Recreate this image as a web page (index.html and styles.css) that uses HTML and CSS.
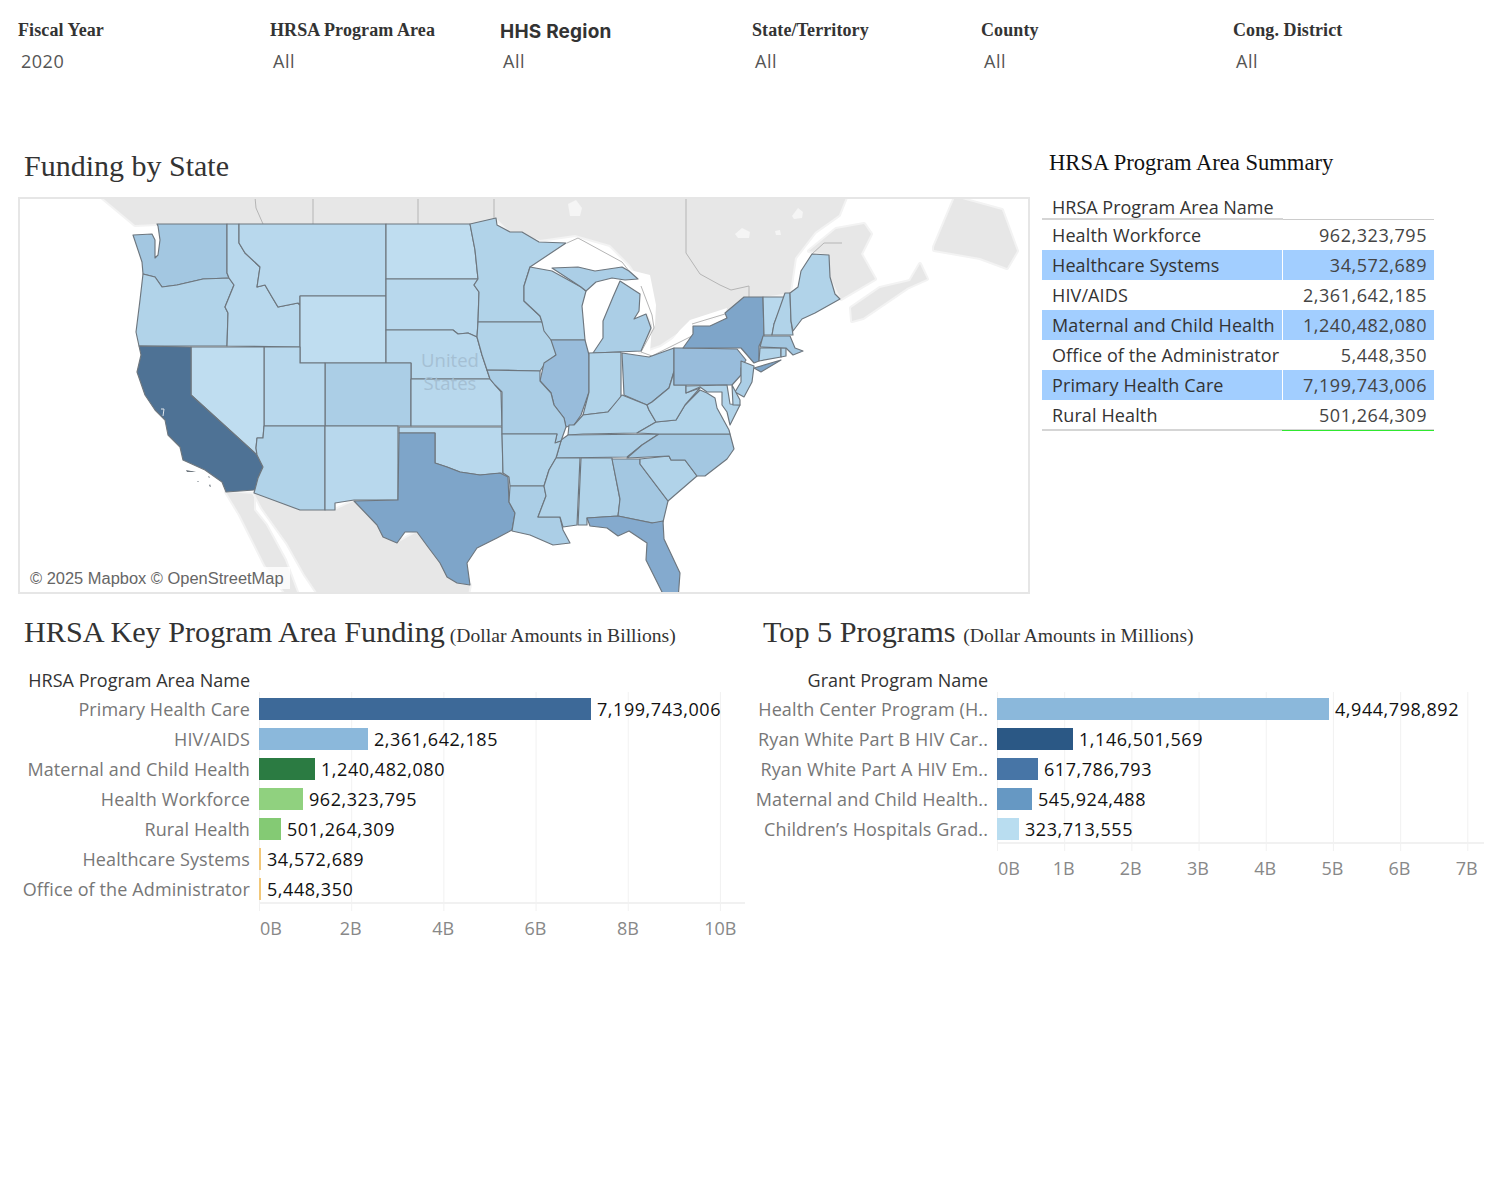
FILE: index.html
```html
<!DOCTYPE html>
<html lang="en">
<head>
<meta charset="utf-8">
<title>HRSA Funding</title>
<link rel="stylesheet" href="styles.css">
</head>
<body>
<header class="filters">
  <div class="filter w252"><div class="filter-label">Fiscal Year</div><div class="filter-value">2020</div></div>
  <div class="filter w230"><div class="filter-label">HRSA Program Area</div><div class="filter-value">All</div></div>
  <div class="filter w252"><div class="filter-label alt">HHS Region</div><div class="filter-value">All</div></div>
  <div class="filter w229"><div class="filter-label">State/Territory</div><div class="filter-value">All</div></div>
  <div class="filter w252"><div class="filter-label">County</div><div class="filter-value">All</div></div>
  <div class="filter"><div class="filter-label">Cong. District</div><div class="filter-value">All</div></div>
</header>

<section class="top">
  <div class="map-col">
    <h2 class="map-title">Funding by State</h2>
    <div class="map-frame">
      <svg class="map" viewBox="20 199 1008 393" width="1008" height="393" aria-label="Map of funding by state">
        <g class="land">
          <polygon points="93,190 849,190 839,215 815,232 795,258 790,293 763,297 744,297 725,313 690,325 660,345 640,352 651,328 646,290 630,265 610,245 575,235 540,240 510,232 496,218 494,224 157,224 135,225"/>
          <polygon points="809,251 836,229 864,224 871,234 861,254 875,279 841,299 830,277 829,255"/>
          <polygon points="852,321 851,308 880,288 910,281 920,264 927,279 907,288 863,318"/>
          <polygon points="934,247 955,197 1002,210 1017,251 1007,268 980,258 934,250"/>
          <polygon points="226,492 254,494 254,510 266,525 285,560 300,600 290,600 265,565 250,535 240,515"/>
          <polygon points="254,493 300,510 335,510 354,501 377,525 397,543 417,532 440,563 457,583 470,585 467,600 322,600 305,575 287,543 262,508"/>
        </g>
        <g class="water">
          <polygon points="530,267 552,250 578,237 622,262 640,285 640,300 600,290 570,275"/>
          <polygon points="630,270 650,275 656,305 655,325 640,352 655,356 692,336 693,326 725,315 727,308 690,320 680,330 668,345 650,352 652,325"/>
        </g>
        <g class="lakes">
          <polygon points="568,204 576,200 582,208 580,216 570,216"/>
          <polygon points="735,234 742,228 750,232 749,238 738,238"/>
          <polygon points="775,231 780,230 781,235 776,235"/>
          <polygon points="792,216 798,208 803,212 802,218 794,219"/>
        </g>
        <g class="borders">
          <polyline points="255,197 256,208 263,224"/>
          <polyline points="313,197 313,224"/>
          <polyline points="418,197 418,224"/>
          <polyline points="494,197 494,224"/>
          <polyline points="686,197 686,253 700,274 720,285 731,290 749,286 749,297"/>
          <polyline points="812,254 824,243 842,243"/>
          <polyline points="567,243 578,238 622,262 629,271"/>
          <polyline points="641,286 652,315 654,328 641,352 652,356 692,336"/>
          <polyline points="692,324 725,314"/>
        </g>
        <g class="states">
          <polygon class="s3" points="157,224 227,224 227,273 229,278 203,279 177,285 162,287 155,277 143,274 142,262 133,235 152,234 155,240 155,258 158,255 160,240 158,226"/>
          <polygon class="s5" points="143,274 155,277 162,287 177,285 203,279 229,278 234,285 225,307 228,313 227,346 139,346 136,332 140,300"/>
          <polygon class="s6" points="227,224 239,224 239,243 245,253 260,267 257,287 265,285 272,297 278,307 298,303 300,305 300,347 227,346 228,313 225,307 234,285 229,278 227,273"/>
          <polygon class="s6" points="239,224 386,224 386,296 300,296 300,305 298,303 278,307 272,297 265,285 257,287 260,267 245,253 239,243"/>
          <polygon class="s7" points="300,296 386,296 386,363 300,363"/>
          <polygon class="s7" points="386,224 470,224 475,250 478,279 386,279"/>
          <polygon class="s6" points="386,279 478,279 474,285 479,292 478,322 477,337 468,333 458,334 453,330 386,330"/>
          <polygon class="s6" points="386,330 453,330 458,334 468,333 477,337 482,355 487,370 490,379 411,379 411,363 386,363"/>
          <polygon class="s4" points="325,363 411,363 411,426 325,426"/>
          <polygon class="s6" points="411,379 490,379 495,385 501,392 502,426 411,426"/>
          <polygon class="s6" points="264,347 300,347 300,363 325,363 325,426 264,426"/>
          <polygon class="s7" points="191,347 264,347 264,426 263,438 257,438 256,448 257,455 191,395"/>
          <polygon class="s0" points="139,346 191,347 191,395 257,455 263,467 258,478 257,488 254,490 226,492 222,482 205,470 183,460 180,447 168,435 165,420 155,410 145,395 137,372 141,355"/>
          <polygon class="s5" points="264,426 325,426 325,510 300,510 254,493 258,478 263,467 257,455 256,448 257,438 263,438"/>
          <polygon class="s6" points="325,426 398,426 398,500 354,500 335,503 335,510 325,510"/>
          <polygon class="s6" points="399,427 502,427 503,473 480,475 460,472 447,467 435,463 435,433 399,433"/>
          <polygon class="s1" points="399,433 435,433 435,463 447,467 460,472 480,475 500,473 508,477 509,502 515,513 512,530 497,538 477,548 467,563 470,585 457,583 447,577 440,563 428,547 417,532 405,532 397,543 383,537 377,525 354,501 398,500"/>
          <polygon class="s5" points="470,224 496,218 497,225 510,232 522,232 539,242 566,243 530,267 524,286 524,301 540,316 542,322 478,322 479,292 474,285 478,279 475,250"/>
          <polygon class="s5" points="478,322 542,322 545,330 555,340 556,355 544,365 540,371 487,370 482,355 477,337"/>
          <polygon class="s5" points="530,267 552,271 581,287 586,291 582,306 585,340 551,340 544,331 542,322 540,316 524,301 524,286"/>
          <polygon class="s4" points="552,268 578,267 595,271 622,267 629,271 638,279 625,280 612,278 596,282 586,291 581,287"/>
          <polygon class="s4" points="620,281 640,294 639,311 634,319 646,314 651,328 641,351 593,353 603,338 603,321 613,297"/>
          <polygon class="s2" points="551,340 585,340 589,355 589,392 581,415 574,425 566,427 564,418 554,405 551,393 540,381 544,363 556,355"/>
          <polygon class="s5" points="589,353 621,352 621,398 608,412 583,415 589,392"/>
          <polygon class="s3" points="622,353 649,357 674,348 674,371 669,388 652,402 647,405 624,395"/>
          <polygon class="s5" points="583,415 608,412 622,395 647,405 649,410 656,422 637,433 583,434 568,435 569,425 574,425"/>
          <polygon class="s4" points="568,435 659,434 642,445 627,457 556,458 561,440"/>
          <polygon class="s4" points="487,370 540,371 540,381 551,393 554,405 564,418 566,427 561,441 555,443 557,434 502,434 502,392 495,385 490,379"/>
          <polygon class="s5" points="502,434 557,434 555,443 561,441 556,458 549,470 544,486 510,486 509,477 503,473"/>
          <polygon class="s4" points="510,486 544,486 546,496 538,517 560,517 563,530 570,543 553,545 530,535 512,531 515,513 509,502"/>
          <polygon class="s5" points="556,458 580,458 577,525 563,527 560,517 538,517 546,496 544,486 549,470"/>
          <polygon class="s5" points="581,458 612,458 620,500 618,516 587,518 587,525 578,525"/>
          <polygon class="s3" points="612,459 640,459 640,464 668,501 663,522 653,523 618,516 620,499"/>
          <polygon class="s1b" points="587,518 618,516 652,523 663,521 664,539 680,573 678,600 666,600 654,576 646,560 647,543 629,531 618,536 607,528 590,526"/>
          <polygon class="s5" points="640,459 669,456 671,460 685,460 697,476 690,482 668,501 640,464"/>
          <polygon class="s3" points="659,434 730,434 734,449 727,459 705,476 697,476 685,460 671,460 669,456 627,458 642,445"/>
          <polygon class="s5" points="637,433 656,422 676,420 685,405 700,390 707,393 715,398 717,408 729,430 730,434 659,434"/>
          <polygon class="s5" points="647,405 652,402 669,388 674,372 674,385 686,385 686,393 700,388 685,405 676,420 656,422 649,410"/>
          <polygon class="s2" points="674,348 683,348 737,349 746,360 741,368 741,375 732,385 674,385"/>
          <polygon class="s1" points="683,348 693,334 693,326 710,326 727,318 725,313 744,297 763,297 764,336 759,346 759,361 754,363 741,348"/>
          <polygon class="s1" points="754,368 781,360 761,372"/>
          <polygon class="s4" points="741,361 754,366 752,382 744,397 735,392 741,382 741,368"/>
          <polygon class="s5" points="686,386 727,385 730,404 740,405 730,425 727,412 722,405 722,392 707,392 700,387 686,393"/>
          <polygon class="s5" points="732,385 740,400 740,405 733,405"/>
          <polygon class="s5" points="760,348 781,348 781,357 759,361"/>
          <polygon class="s5" points="781,348 786,348 786,356 781,357"/>
          <polygon class="s3" points="763,336 790,336 795,348 803,351 793,355 786,348 760,347"/>
          <polygon class="s6" points="763,297 785,297 774,324 772,335 764,335"/>
          <polygon class="s5" points="785,293 790,293 791,321 793,335 772,335 774,324"/>
          <polygon class="s5" points="790,293 798,287 801,271 812,254 829,255 830,277 835,294 840,299 815,313 802,319 793,331 791,321"/>
        </g>
        <g class="islands">
          <polygon points="186,470 191,471 196,471 192,472 187,472"/>
          <polygon points="197,481 199,481 198,482"/>
          <polygon points="208,476 210,477 209,478"/>
          <polygon points="209,486 210,484 211,487"/>
        </g>
        <polyline class="bay" points="161,409 164,409 163,416"/>
        <text class="map-label" x="450" y="367">United</text>
        <text class="map-label" x="450" y="390">States</text>
      </svg>
      <div class="attribution">© 2025 Mapbox © OpenStreetMap</div>
    </div>
  </div>

  <div class="summary-col">
    <h2 class="summary-title">HRSA Program Area Summary</h2>
    <div class="summary-head"><span class="summary-head-cell">HRSA Program Area Name</span></div>
    <div class="summary-row"><span class="name">Health Workforce</span><span class="num">962,323,795</span></div>
    <div class="summary-row band"><span class="name">Healthcare Systems</span><span class="num">34,572,689</span></div>
    <div class="summary-row"><span class="name">HIV/AIDS</span><span class="num">2,361,642,185</span></div>
    <div class="summary-row band"><span class="name">Maternal and Child Health</span><span class="num">1,240,482,080</span></div>
    <div class="summary-row"><span class="name">Office of the Administrator</span><span class="num">5,448,350</span></div>
    <div class="summary-row band"><span class="name">Primary Health Care</span><span class="num">7,199,743,006</span></div>
    <div class="summary-row last"><span class="name">Rural Health</span><span class="num">501,264,309</span></div>
  </div>
</section>

<section class="bottom">
  <div class="chart-block left">
    <h2 class="chart-title">HRSA Key Program Area Funding<small> (Dollar Amounts in Billions)</small></h2>
    <div class="chart">
      <div class="labels">
        <div class="col-head">HRSA Program Area Name</div>
        <div class="cat">Primary Health Care</div>
        <div class="cat">HIV/AIDS</div>
        <div class="cat">Maternal and Child Health</div>
        <div class="cat">Health Workforce</div>
        <div class="cat">Rural Health</div>
        <div class="cat">Healthcare Systems</div>
        <div class="cat">Office of the Administrator</div>
      </div>
      <div class="plot-col">
        <div class="plot">
          <div class="bar-row"><i class="bar" style="width:332px;background:#3d6998"></i><span>7,199,743,006</span></div>
          <div class="bar-row"><i class="bar" style="width:109px;background:#8bb8db"></i><span>2,361,642,185</span></div>
          <div class="bar-row"><i class="bar" style="width:56px;background:#2b7b42"></i><span>1,240,482,080</span></div>
          <div class="bar-row"><i class="bar" style="width:44px;background:#90d17f"></i><span>962,323,795</span></div>
          <div class="bar-row"><i class="bar" style="width:22px;background:#84ca74"></i><span>501,264,309</span></div>
          <div class="bar-row"><i class="bar" style="width:2px;background:#f2c879"></i><span>34,572,689</span></div>
          <div class="bar-row"><i class="bar" style="width:2px;background:#f2c879"></i><span>5,448,350</span></div>
        </div>
        <div class="axis">
          <span>0B</span><span>2B</span><span>4B</span><span>6B</span><span>8B</span><span>10B</span>
        </div>
      </div>
    </div>
  </div>

  <div class="chart-block right">
    <h2 class="chart-title">Top 5 Programs<small> (Dollar Amounts in Millions)</small></h2>
    <div class="chart">
      <div class="labels">
        <div class="col-head">Grant Program Name</div>
        <div class="cat">Health Center Program (H..</div>
        <div class="cat">Ryan White Part B HIV Car..</div>
        <div class="cat">Ryan White Part A HIV Em..</div>
        <div class="cat">Maternal and Child Health..</div>
        <div class="cat">Children’s Hospitals Grad..</div>
      </div>
      <div class="plot-col">
        <div class="plot">
          <div class="bar-row"><i class="bar" style="width:332px;background:#8bb8db"></i><span>4,944,798,892</span></div>
          <div class="bar-row"><i class="bar" style="width:76px;background:#2b5885"></i><span>1,146,501,569</span></div>
          <div class="bar-row"><i class="bar" style="width:41px;background:#4775a6"></i><span>617,786,793</span></div>
          <div class="bar-row"><i class="bar" style="width:35px;background:#6698c3"></i><span>545,924,488</span></div>
          <div class="bar-row"><i class="bar" style="width:22px;background:#b9ddf0"></i><span>323,713,555</span></div>
        </div>
        <div class="axis">
          <span>0B</span><span>1B</span><span>2B</span><span>3B</span><span>4B</span><span>5B</span><span>6B</span><span>7B</span>
        </div>
      </div>
    </div>
  </div>
</section>
</body>
</html>
```

FILE: styles.css
```css
* { box-sizing: border-box; }
html, body { margin: 0; padding: 0; background: #fff; }
body { width: 1499px; height: 1199px; overflow: hidden; font-family: "Open Sans", sans-serif; color: #333; }
h2 { margin: 0; font-weight: 400; }

.filters { display: flex; height: 140px; padding: 20px 0 0 18px; }
.filter { flex: none; }
.w252 { width: 252px; }
.w230 { width: 230px; }
.w229 { width: 229px; }
.filter-label { height: 20px; font: bold 18px/20px "Liberation Serif", serif; color: #333; letter-spacing: .1px; }
.filter-label.alt { font: bold 19px/24px Inter, sans-serif; letter-spacing: .2px; }
.filter-value { margin-top: 11px; padding-left: 3px; font-size: 18px; line-height: 20px; color: #555; letter-spacing: .5px; }

.top { display: flex; height: 454px; padding-left: 18px; }
.map-col { width: 1012px; flex: none; }
.map-title { height: 57px; padding: 7px 0 0 6px; font: 30px/38px "Liberation Serif", serif; color: #333; }
.map-frame { position: relative; width: 1012px; height: 397px; border: 2px solid #e6e6e6; overflow: hidden; background: #fff; }
.map { display: block; }
.land polygon { fill: #e7e7e7; stroke: #f3f3f3; stroke-width: 4; stroke-linejoin: round; paint-order: stroke; }
.water polygon { fill: #fff; }
.lakes polygon { fill: #f5f5f5; }
.borders polyline { fill: none; stroke: #b5b5b5; stroke-width: 1; }
.states polygon { stroke: #6d767e; stroke-width: 1.15; stroke-linejoin: round; }
.islands polygon { fill: #6d767e; }
.bay { fill: none; stroke: #dfe5ea; stroke-width: 1; }
.s0 { fill: #4e7295; }
.s1 { fill: #7ea5c9; }
.s1b { fill: #84aace; }
.s2 { fill: #98bcdb; }
.s3 { fill: #a3c7e1; }
.s4 { fill: #abcee6; }
.s5 { fill: #b1d3e9; }
.s6 { fill: #b8d8ed; }
.s7 { fill: #bfddf0; }
.map-label { font-family: "Open Sans", sans-serif; font-size: 18.5px; fill: #a5c0d4; text-anchor: middle; }
.attribution { position: absolute; left: 4px; bottom: 3px; padding: 0 6px; height: 22px; font: 16.45px/22px "Liberation Sans", sans-serif; color: #666; background: rgba(255,255,255,.8); }

.summary-col { width: 392px; margin-left: 12px; flex: none; }
.summary-title { height: 57px; padding: 4px 0 0 7px; font: 22.6px/38px "Liberation Serif", serif; color: #111; }
.summary-head { height: 23px; border-bottom: 1px solid #ccc; }
.summary-head-cell { display: block; width: 241px; height: 23px; padding-left: 10px; border-bottom: 2px solid #d5d5d5; font-size: 18px; line-height: 20px; color: #333; }
.summary-row { display: flex; height: 30px; line-height: 30px; font-size: 18px; }
.summary-row .name { width: 240px; padding-left: 10px; white-space: nowrap; color: #333; letter-spacing: .12px; }
.summary-row .num { flex: 1; padding-right: 7px; text-align: right; color: #444; letter-spacing: .55px; }
.summary-row.band .name, .summary-row.band .num { background: #a2ceff; }
.summary-row.band .num { margin-left: 1px; }
.summary-row.last { height: 31px; border-bottom: 2px solid #d5d5d5; }
.summary-row.last .num { height: 31px; border-bottom: 1px solid #2fe82f; }

.bottom { display: flex; }
.chart-block { flex: none; }
.chart-block.left { width: 750px; }
.chart-block.right { width: 749px; }
.chart-title { height: 74px; font: 30.2px/77px "Liberation Serif", serif; color: #333; white-space: nowrap; }
.chart-title small { font-size: 19.6px; }
.left .chart-title { padding-left: 24px; }
.right .chart-title { padding-left: 13px; }
.right .chart-title small { margin-left: 3px; }
.chart { display: flex; }
.labels { flex: none; text-align: right; padding-right: 9px; }
.left .labels { width: 259px; }
.right .labels { width: 247px; }
.col-head { height: 24px; line-height: 24px; font-size: 18px; color: #333; margin-bottom: 2px; }
.cat { height: 30px; line-height: 30px; font-size: 18px; color: #777; white-space: nowrap; letter-spacing: .12px; }
.plot-col { padding-top: 24px; }
.plot { padding-top: 2px; border-bottom: 2px solid #f1f1f1; background-repeat: repeat-x; background-image: linear-gradient(to right, #f1f1f1 1px, transparent 1px); }
.left .plot { width: 486px; height: 212px; background-size: 92.2px 100%; }
.right .plot { width: 487px; height: 152px; background-size: 67.2px 100%; }
.bar-row { display: flex; align-items: center; height: 30px; font-size: 18px; color: #111; letter-spacing: .55px; }
.bar { display: block; height: 22px; flex: none; margin-right: 6px; }
.axis { display: grid; height: 48px; line-height: 48px; font-size: 18px; color: #888; text-align: center; background-repeat: repeat-x; background-image: linear-gradient(to right, #f1f1f1 1px, transparent 1px); }
.left .axis { grid-template-columns: 45.5px repeat(5, 92.4px); background-size: 92.2px 7px; }
.right .axis { grid-template-columns: 33px repeat(7, 67.2px); background-size: 67.2px 7px; }
.axis span:first-child { text-align: left; padding-left: 1px; white-space: nowrap; }
```
